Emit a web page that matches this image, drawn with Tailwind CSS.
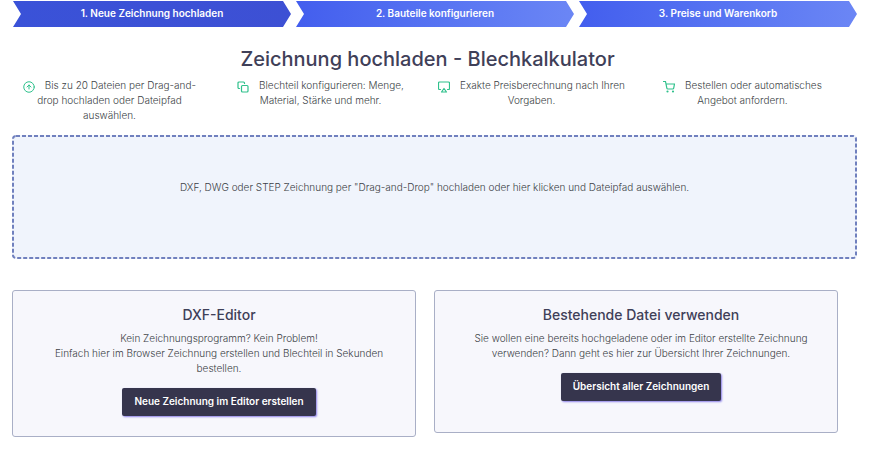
<!DOCTYPE html>
<html lang="de">
<head>
  <meta charset="UTF-8">
  <meta name="viewport" content="width=device-width, initial-scale=1.0">
  <title>Zeichnung hochladen - Blechkalkulator</title>
  <script src="https://cdn.jsdelivr.net/npm/@tailwindcss/browser@4"></script>
</head>
<body class="bg-white font-['Inter',sans-serif] text-[10px] leading-[15px] font-light text-[#3c3f46]">

<main class="pt-px">
  <!-- steps -->
  <nav class="flex gap-[5px] pl-[13px] pr-[23px] text-center font-semibold text-white" aria-label="Schritte">
    <a href="#" aria-current="step" class="flex-1 h-[26px] pt-[5px] bg-linear-to-r from-[#3a52d8] to-[#3d50d4] [clip-path:polygon(0_0,calc(100%-8px)_0,100%_50%,calc(100%-8px)_100%,0_100%,8px_50%)]">1. Neue Zeichnung hochladen</a>
    <a href="#" class="flex-1 h-[26px] pt-[5px] bg-linear-to-r from-[#435eee] to-[#6b86f5] [clip-path:polygon(0_0,calc(100%-8px)_0,100%_50%,calc(100%-8px)_100%,0_100%,8px_50%)]">2. Bauteile konfigurieren</a>
    <a href="#" class="flex-1 h-[26px] pt-[5px] bg-linear-to-r from-[#435eee] to-[#6b86f5] [clip-path:polygon(0_0,calc(100%-8px)_0,100%_50%,calc(100%-8px)_100%,0_100%,8px_50%)]">3. Preise und Warenkorb</a>
  </nav>

  <h1 class="mt-[18px] pr-[25px] text-center text-[20px] leading-[28px] font-medium text-[#3f4058]">Zeichnung hochladen - Blechkalkulator</h1>

  <!-- features -->
  <ul class="mt-[5px] pl-1 pr-8 grid grid-cols-4 text-center">
    <li class="px-2.5">
      <svg class="inline w-3 h-3 mt-0.5 mr-[7px] text-[#2fc18c]" viewBox="0 0 24 24" fill="none" stroke="currentColor" stroke-width="2" stroke-linecap="round" stroke-linejoin="round"><circle cx="12" cy="12" r="10.5"/><path d="m16 12-4-4-4 4M12 16V8"/></svg>
      Bis zu 20 Dateien per Drag-and-drop hochladen oder Dateipfad auswählen.
    </li>
    <li class="px-2.5">
      <svg class="inline w-3 h-3 mt-0.5 mr-[7px] text-[#2fc18c]" viewBox="0 0 24 24" fill="none" stroke="currentColor" stroke-width="2.4" stroke-linecap="round" stroke-linejoin="round"><rect x="9" y="9" width="13" height="13" rx="2"/><path d="M5 15H4a2 2 0 0 1-2-2V4a2 2 0 0 1 2-2h9a2 2 0 0 1 2 2v1"/></svg>
      Blechteil konfigurieren: Menge, Material, Stärke und mehr.
    </li>
    <li class="px-2.5">
      <svg class="inline w-3 h-3 mt-0.5 mr-[7px] text-[#2fc18c]" viewBox="0 0 24 24" fill="none" stroke="currentColor" stroke-width="2.4" stroke-linecap="round" stroke-linejoin="round"><path d="M5 17H3a2 2 0 0 1-2-2V4a2 2 0 0 1 2-2h18a2 2 0 0 1 2 2v11a2 2 0 0 1-2 2h-2"/><path d="m12 15 5 7H7z"/></svg>
      Exakte Preisberechnung nach Ihren Vorgaben.
    </li>
    <li class="px-2.5">
      <svg class="inline w-3 h-3 mt-0.5 mr-[7px] text-[#2fc18c]" viewBox="0 0 24 24" fill="none" stroke="currentColor" stroke-width="2.4" stroke-linecap="round" stroke-linejoin="round"><circle cx="9" cy="21" r="1"/><circle cx="20" cy="21" r="1"/><path d="M1 1h4l2.68 13.39a2 2 0 0 0 2 1.61h9.72a2 2 0 0 0 2-1.61L23 6H6"/></svg>
      Bestellen oder automatisches Angebot anfordern.
    </li>
  </ul>

  <!-- dropzone -->
  <div class="mt-3 pl-3 pr-[23px]">
    <button type="button" class="relative block w-full pt-[45px] pb-16 rounded bg-[#f0f4fc] cursor-pointer">
      <!-- short dashes, border-dashed draws them too long -->
      <svg class="absolute inset-0 w-full h-full p-px overflow-visible" aria-hidden="true"><rect width="100%" height="100%" rx="3" fill="none" stroke="#7080be" stroke-width="2" stroke-dasharray="4 2"/></svg>
      DXF, DWG oder STEP Zeichnung per "Drag-and-Drop" hochladen oder hier klicken und Dateipfad auswählen.
    </button>
  </div>

  <!-- cards -->
  <div class="mt-[31px] pl-3 pr-[42px] flex items-start gap-[18px] text-center">
    <section class="flex-1 min-h-[143px] pt-3.5 pb-5 pl-[38px] pr-7 border border-[#a9afc6] rounded-[3px] bg-[#f7f7fc]">
      <h2 class="text-[14px] leading-[20px] font-medium text-[#3f4058]">DXF-Editor</h2>
      <p class="mt-1.5">Kein Zeichnungsprogramm? Kein Problem!<br>Einfach hier im Browser Zeichnung erstellen und Blechteil in Sekunden bestellen.</p>
      <button type="button" class="mt-3 h-7 px-3 pb-0.5 rounded-xs bg-[#36354d] font-semibold text-white shadow-[1px_1px_2px_#8c80e8]">Neue Zeichnung im Editor erstellen</button>
    </section>
    <section class="flex-1 min-h-[143px] pt-3.5 pb-5 pl-[38px] pr-7 border border-[#a9afc6] rounded-[3px] bg-[#f7f7fc]">
      <h2 class="text-[14px] leading-[20px] font-medium text-[#3f4058]">Bestehende Datei verwenden</h2>
      <p class="mt-1.5">Sie wollen eine bereits hochgeladene oder im Editor erstellte Zeichnung verwenden? Dann geht es hier zur Übersicht Ihrer Zeichnungen.</p>
      <button type="button" class="mt-3 h-7 px-3 pb-0.5 rounded-xs bg-[#36354d] font-semibold text-white shadow-[1px_1px_2px_#8c80e8]">Übersicht aller Zeichnungen</button>
    </section>
  </div>
</main>

</body>
</html>
